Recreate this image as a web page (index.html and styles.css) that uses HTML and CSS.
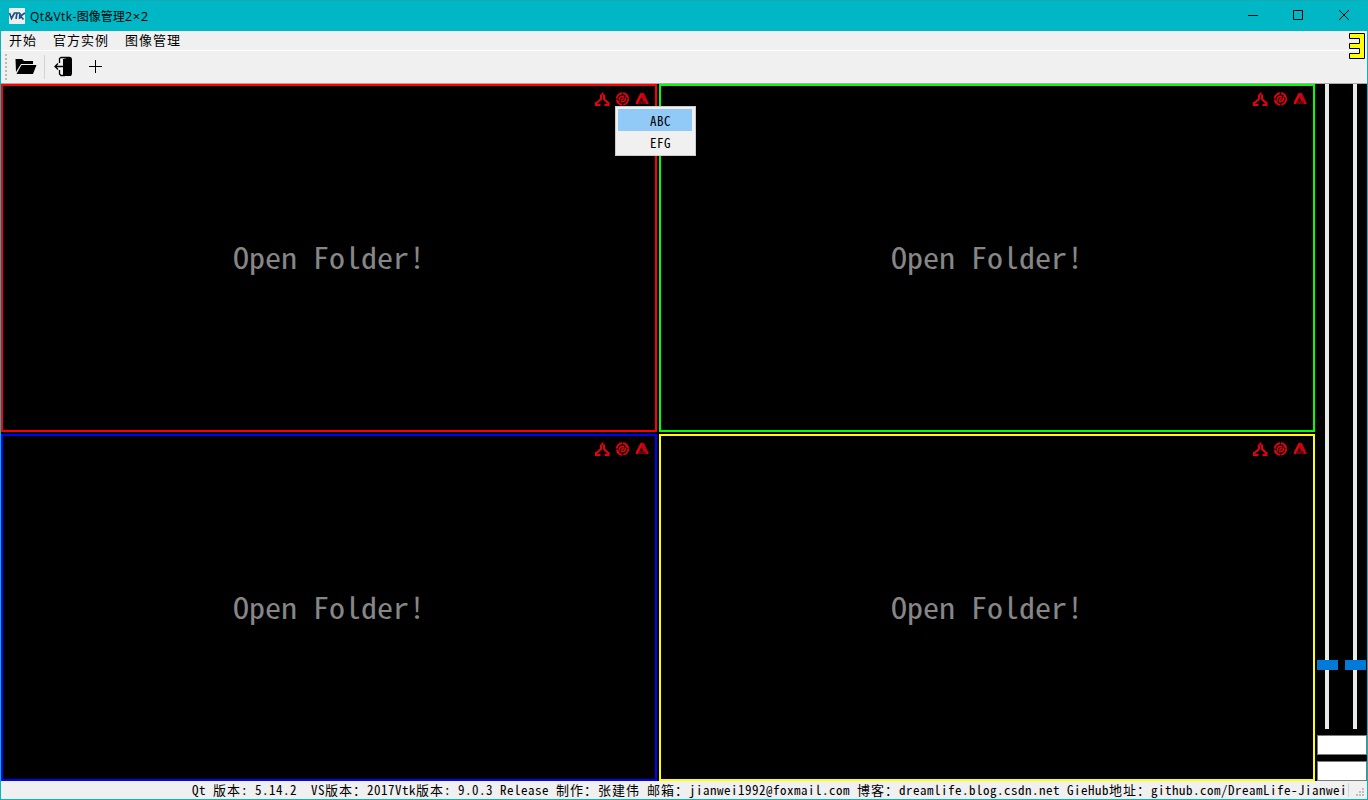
FILE: index.html
```html
<!DOCTYPE html>
<html lang="zh-CN">
<head>
<meta charset="utf-8">
<title>Qt&amp;Vtk-图像管理2×2</title>
<link rel="stylesheet" href="styles.css">
</head>
<body>
<svg class="defs" width="0" height="0">
  <symbol id="tools" viewBox="0 0 56 16">
    <g fill="none" stroke="#e60012" stroke-width="2">
      <path d="M8.500 1.500V4M7 3.500V8L2.500 12M10 3.500V8L14 12M2 11V14H6.500M14.500 11V14H10.500" />
      <circle cx="28.500" cy="8" r="5.700" stroke-width="1.900" stroke-dasharray="7.900 1" />
      <path d="M25.500 9.500C25 6.500 27 5 30 5.200M31.500 6.500C32 9.500 30 11 27 10.800M27 9.500L30 6.500M23 12L25.500 10M31.500 6L34 4" stroke-width="1.500" />
    </g>
    <path d="M46.500 2H50L54.500 12V13H50.500L47 5Z" fill="#c90014" />
    <path d="M46.500 2L42 11V13H44L48 5Z" fill="#e60012" />
    <path d="M45.500 10H51L52 13H44Z" fill="#70000a" />
  </symbol>
</svg>
<div class="window">
  <header class="titlebar">
    <svg class="logo" width="16" height="16" viewBox="0 0 16 16"><path fill="#eee" d="M0 0H16V16H0Z"/><path d="M.5 5L2.500 10.500L5.500 5M5 5H11M8 5L7 11M11 5L10.500 11M16 5L11.500 8L14.500 11.500" fill="none" stroke="#1c5288" stroke-width="1.700"/></svg>
    <span class="title">Qt&amp;Vtk-<span class="title-cjk">图像管理</span><span class="title-grid">2×2</span></span>
    <svg class="controls" width="138" height="30" viewBox="0 0 138 30" fill="none" stroke="#000"><path d="M19 14.500H29M64.500 9.500H73.500V18.500H64.500Z"/><path d="M110 9L120 19M120 9L110 19"/></svg>
  </header>
  <div class="tools-area">
    <nav class="menubar"><span>开始</span><span>官方实例</span><span>图像管理</span></nav>
    <div class="toolbar">
      <svg width="110" height="32" viewBox="0 0 110 32">
        <path d="M5 3V29" stroke="#b8b8b8" stroke-width="2" stroke-dasharray="2 2"/>
        <path d="M14.500 8H21L23 10H32V13H20L15 21Z"/><path d="M20.500 14H35.500L32 23H15.500Z"/>
        <path d="M43.500 4V28" stroke="#d2d2d2"/>
        <path d="M62 8L70 6L71 8V23L70 25H64L62 24Z"/><path d="M58.500 12V7.500L60 6.500H69M58.500 19V23L60 24.500H64M53.500 15.500H63M57 12.500L54 15.500L57 18.500" fill="none" stroke="#000" stroke-width="1.300"/>
        <path d="M88 15.500H101M94.500 9V22" stroke="#000"/>
      </svg>
    </div>
    <svg class="badge" width="18" height="28" viewBox="0 0 18 28"><path d="M1.500 1.500H16.500V26.500H1.500V21.500H11.500V16.500H1.500V11.500H11.500V6.500H1.500Z" fill="#ff0" stroke="#000"/></svg>
  </div>
  <main class="content">
    <div class="views">
      <section class="view red"><svg class="view-tools"><use href="#tools"/></svg><p>Open Folder!</p></section>
      <section class="view green"><svg class="view-tools"><use href="#tools"/></svg><p>Open Folder!</p></section>
      <section class="view blue"><svg class="view-tools"><use href="#tools"/></svg><p>Open Folder!</p></section>
      <section class="view yellow"><svg class="view-tools"><use href="#tools"/></svg><p>Open Folder!</p></section>
    </div>
    <aside class="side">
      <div class="sliders"><div class="slider"><i class="handle"></i></div><div class="slider"><i class="handle"></i></div></div>
      <div class="field"></div>
      <div class="field"></div>
    </aside>
  </main>
  <footer class="status">
    <span class="status-text">Qt <b>版本</b>: 5.14.2  VS<b>版本：</b>2017Vtk<b>版本</b>: 9.0.3 Release <b>制作：张建伟</b> <b>邮箱：</b>jianwei1992@foxmail.com <b>博客：</b>dreamlife.blog.csdn.net GieHub<b>地址：</b>github.com/DreamLife-Jianwei</span>
    <svg width="20" height="18" viewBox="0 0 20 18"><path d="M1.500 2V16" stroke="#d2d2d2"/><path fill="#bfbfbf" d="M15 7h2v2h-2zM12 10h2v2h-2zM15 10h2v2h-2zM9 13h2v2h-2zM12 13h2v2h-2zM15 13h2v2h-2z"/></svg>
  </footer>
  <div class="menu"><div class="item active">ABC</div><div class="item">EFG</div></div>
</div>
</body>
</html>
```

FILE: styles.css
```css
* { box-sizing: border-box; }
body { margin: 0; font-family: "Noto Sans Mono CJK SC", "Noto Sans CJK SC", monospace; color: #000; }
.defs { display: block; height: 0; }
.window { position: relative; width: 1368px; height: 800px; border: solid #00b7c3; border-width: 0 1px 1px; display: flex; flex-direction: column; background: #f0f0f0; overflow: hidden; }
.titlebar { height: 31px; background: #00b7c5; display: flex; align-items: center; padding-left: 8px; border-top: 1px solid #16aab5; }
.title { margin-left: 5px; font: 12px/30px "Open Sans", "Noto Sans CJK SC", sans-serif; letter-spacing: .4px; }
.title-cjk { letter-spacing: 0; }
.title-grid { letter-spacing: .6px; font-size: 13px; }
.controls { margin-left: auto; }
.tools-area { position: relative; height: 53px; border-bottom: 1px solid #a9a9a9; }
.menubar { height: 19px; display: flex; gap: 16px; padding-left: 8px; font-size: 13px; line-height: 17px; letter-spacing: 1px; }
.toolbar { height: 33px; border-top: 1px solid #fff; }
.toolbar svg { display: block; }
.badge { position: absolute; right: 1px; top: 1px; }
.content { height: 697px; background: #000; display: flex; }
.views { width: 1314px; display: grid; grid-template: 348px 347px / 656px 656px; gap: 2px; }
.view { border: 2px solid; display: flex; align-items: center; justify-content: center; position: relative; }
.view p { margin: 0; font-size: 32px; line-height: 40px; color: #868686; white-space: pre; transform: translateY(-2px) scaleY(.91); }
.view-tools { position: absolute; right: 5px; top: 5px; width: 56px; height: 16px; }
.red { border-color: #f00; }
.green { border-color: #0f0; }
.blue { border-color: #00f; }
.yellow { border-color: #ff0; }
.side { width: 50px; margin-left: 2px; display: flex; flex-direction: column; gap: 6px; }
.sliders { height: 645px; display: flex; gap: 7px; }
.slider { width: 21px; display: flex; flex-direction: column; background: linear-gradient(#e7eaea, #e7eaea) 8px 0 / 4px 100% no-repeat; }
.handle { width: 21px; height: 10px; margin-top: 576px; background: #007ad9; }
.field { height: 20px; background: #fff; border: 1px solid #7a7a7a; }
.status { height: 18px; display: flex; justify-content: flex-end; font-size: 13px; line-height: 18px; white-space: pre; letter-spacing: .5px; }
.status-text { width: 1155px; }
.status b { font-weight: normal; letter-spacing: 1px; }
.menu { position: absolute; left: 614px; top: 106px; width: 81px; height: 50px; padding: 2px 3px 2px 2px; border: 1px solid #ccc; background: #f0f0f0; }
.item { height: 22px; padding-left: 32px; font-size: 13px; line-height: 23px; letter-spacing: .5px; }
.active { background: #91c9f7; }
```
